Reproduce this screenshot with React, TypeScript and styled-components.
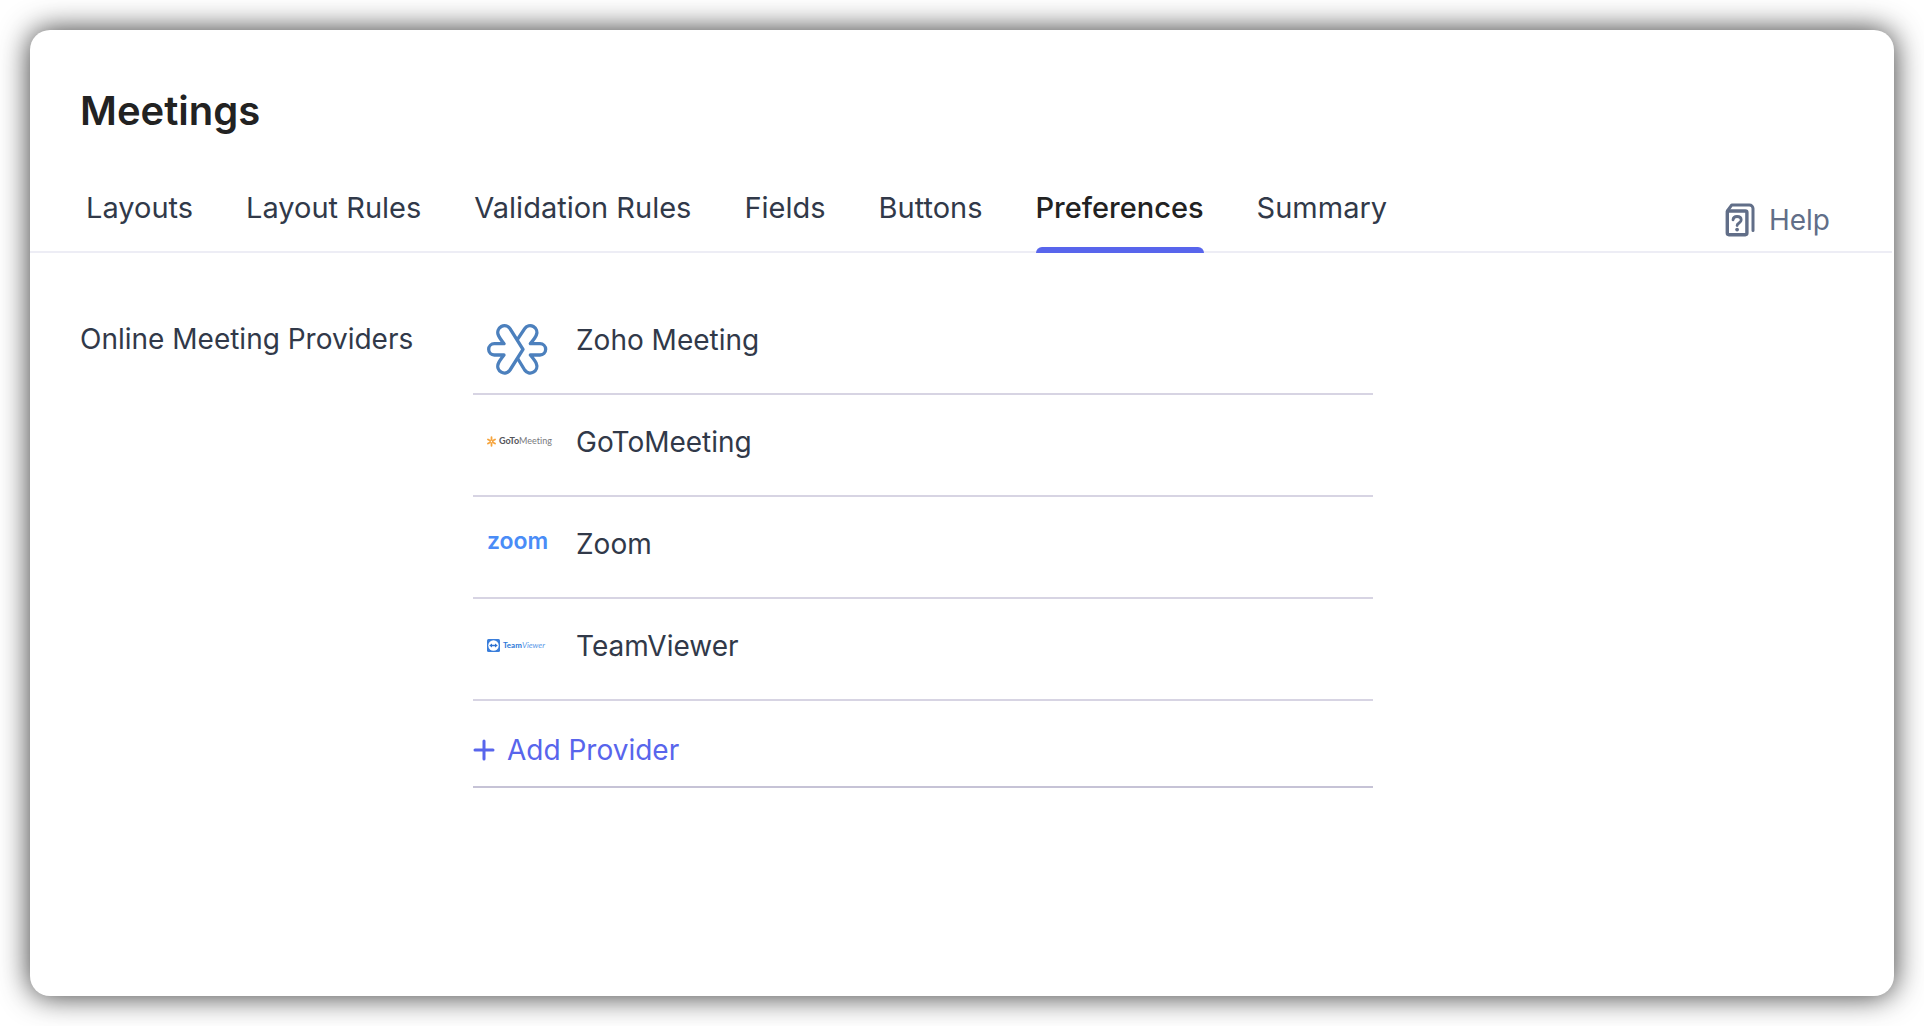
import React from "react";
import styled, { createGlobalStyle } from "styled-components";

const GlobalStyle = createGlobalStyle`
  *, *::before, *::after { box-sizing: border-box; }
  html, body, #root { height: 100%; }
  body {
    margin: 0;
    background: #fff;
    color: #313949;
    font: 400 28px/36px Inter, "Liberation Sans", sans-serif;
  }
`;

const Page = styled.div`
  display: flex;
  min-height: 100%;
  padding: 30px;
`;

const Card = styled.main`
  flex: 1;
  min-width: 0;
  padding-top: 57px;
  border-radius: 20px;
  background: #fff;
  box-shadow: 0 0 30px rgba(0, 0, 0, 0.8);
`;

const Title = styled.h1`
  margin: 0;
  padding-left: 50px;
  color: #222;
  font-size: 40px;
  font-weight: 600;
  line-height: 48px;
`;

const TabBar = styled.div`
  display: flex;
  align-items: flex-end;
  justify-content: space-between;
  margin: 55px 2px 0 0;
  padding: 0 62px 0 56px;
  border-bottom: 2px solid #ededf5;
`;

const Tabs = styled.nav`
  display: flex;
  gap: 53px;
  margin-bottom: -2px;
`;

const Tab = styled.a<{ $active?: boolean }>`
  display: flex;
  flex-direction: column;
  gap: 21px;
  color: ${(p) => (p.$active ? "#222" : "#313949")};
  font-size: 29px;
  font-weight: ${(p) => (p.$active ? 500 : 400)};
  text-decoration: none;
  white-space: nowrap;

  &::after {
    content: "";
    height: 6px;
    border-radius: 6px 6px 0 0;
    background: ${(p) => (p.$active ? "#5865ec" : "transparent")};
  }
`;

const HelpLink = styled.a`
  display: flex;
  align-items: center;
  gap: 14px;
  margin-bottom: 13px;
  color: #616e88;
  text-decoration: none;
`;

const Content = styled.section`
  display: flex;
  padding: 40px 50px;
`;

const SectionLabel = styled.h2`
  flex: 0 0 393px;
  margin: 0;
  padding-top: 28px;
  font-size: 28px;
  font-weight: 400;
  line-height: 36px;
`;

const ProviderList = styled.ul`
  flex: 0 1 900px;
  margin: 0;
  padding: 0;
  list-style: none;
`;

const ProviderRow = styled.li`
  display: flex;
  align-items: flex-start;
  min-height: 102px;
  padding: 29px 0 0 14px;
  border-bottom: 2px solid #d7d4e3;
`;

const LogoCell = styled.div`
  display: flex;
  align-items: center;
  flex: 0 0 89px;
  min-height: 34px;
`;

const Wordmark = styled.span<{ $size: number; $color: string }>`
  display: flex;
  align-items: center;
  gap: 3px;
  color: ${(p) => p.$color};
  font-family: Lato, sans-serif;
  font-size: ${(p) => p.$size}px;
  font-weight: 700;
  font-variant-ligatures: none;
  line-height: 28px;
  white-space: nowrap;
`;

const ZoomMark = styled(Wordmark)`
  padding-bottom: 4px;
  font-family: Inter, sans-serif;
  font-weight: 600;
`;

const Thin = styled.span<{ $color: string; $slanted?: boolean }>`
  color: ${(p) => p.$color};
  font-style: ${(p) => (p.$slanted ? "italic" : "normal")};
  font-weight: 400;
`;

const AddRow = styled.li`
  padding: 31px 0 18px;
  border-bottom: 2px solid #c6c3d6;
`;

const AddButton = styled.button`
  display: flex;
  align-items: center;
  gap: 12px;
  padding: 0;
  border: 0;
  background: none;
  color: #5865ec;
  font: inherit;
  cursor: pointer;
`;

const HelpIcon = () => (
  <svg width="30" height="34" viewBox="0 0 30 34" fill="none" stroke="currentColor" strokeLinecap="round" strokeLinejoin="round" aria-hidden="true">
    <rect x="2.3" y="8" width="19.6" height="23.7" rx="1.6" strokeWidth="3.4" />
    <path d="M2.3 8 6.8 1.9H24.4a3.6 3.6 0 0 1 3.6 3.6V27.4" strokeWidth="3" />
    <path d="M8 16.8c.2-2 1.8-3.300 4-3.300 2.4 0 4.2 1.4 4.2 3.600 0 2.900-4.100 2.800-4.100 5.400" strokeWidth="2.8" />
    <circle cx="12.1" cy="26.6" r="1.9" fill="currentColor" stroke="none" />
  </svg>
);

const ZohoMeetingLogo = () => (
  <svg width="61" height="54" viewBox="82 66 183 162" fill="none" stroke="#4c80bd" strokeWidth="10" strokeLinejoin="round" role="img" aria-label="Zoho Meeting logo">
    <path d="M190 148 151 86A20 20 0 0 0 116 105Q118 112 133 131H104A17 17 0 0 0 104 165H133Q118 184 116 191A20 20 0 0 0 151 210Z" />
    <path d="M173 119 195 86A20 20 0 0 1 230 105Q228 112 212 131H241A17 17 0 0 1 241 165H212Q228 184 230 191A20 20 0 0 1 195 210L173 174" />
  </svg>
);

const GoToMeetingLogo = () => (
  <Wordmark $size={9} $color="#55565a">
    <svg width="9" height="11" viewBox="0 0 18 22" stroke="#f6a43c" strokeWidth="3.6" strokeLinecap="round" aria-hidden="true">
      <path d="M9 2.500V7M9 15v4.500M2 7l3.800 2M12.200 13l3.800 2M2 15l3.800-2M12.200 9 16 7" />
      <circle cx="9" cy="11" r="2.4" fill="none" strokeWidth="2" />
    </svg>
    <span>GoTo<Thin $color="#77787c">Meeting</Thin></span>
  </Wordmark>
);

const ZoomLogo = () => <ZoomMark $size={23} $color="#4a8cf7">zoom</ZoomMark>;

const TeamViewerLogo = () => (
  <Wordmark $size={8} $color="#2b78d8">
    <svg width="13" height="13" viewBox="0 0 26 26" aria-hidden="true">
      <rect width="26" height="26" rx="3" fill="#3a7edb" />
      <circle cx="13" cy="13" r="10.5" fill="#fff" />
      <path d="m4.500 13 5.500-4v2.700h6V9l5.500 4-5.500 4v-2.700h-6V17z" fill="#2b70d0" />
    </svg>
    <span>Team<Thin $color="#5b99e8" $slanted>Viewer</Thin></span>
  </Wordmark>
);

const PlusIcon = () => (
  <svg width="22" height="22" viewBox="0 0 22 22" stroke="currentColor" strokeWidth="3" strokeLinecap="round" aria-hidden="true">
    <path d="M11 2v18M2 11h18" />
  </svg>
);

const tabs = ["Layouts", "Layout Rules", "Validation Rules", "Fields", "Buttons", "Preferences", "Summary"];

const providers = [
  { name: "Zoho Meeting", Logo: ZohoMeetingLogo },
  { name: "GoToMeeting", Logo: GoToMeetingLogo },
  { name: "Zoom", Logo: ZoomLogo },
  { name: "TeamViewer", Logo: TeamViewerLogo },
];

export default function App() {
  const [active, setActive] = React.useState("Preferences");
  return (
    <>
      <GlobalStyle />
      <Page>
        <Card>
          <Title>Meetings</Title>
          <TabBar>
            <Tabs>
              {tabs.map((tab) => (
                <Tab
                  key={tab}
                  href="#"
                  $active={tab === active}
                  aria-current={tab === active ? "page" : undefined}
                  onClick={() => setActive(tab)}
                >
                  {tab}
                </Tab>
              ))}
            </Tabs>
            <HelpLink href="#">
              <HelpIcon />
              Help
            </HelpLink>
          </TabBar>
          <Content>
            <SectionLabel>Online Meeting Providers</SectionLabel>
            <ProviderList>
              {providers.map(({ name, Logo }) => (
                <ProviderRow key={name}>
                  <LogoCell>
                    <Logo />
                  </LogoCell>
                  {name}
                </ProviderRow>
              ))}
              <AddRow>
                <AddButton type="button">
                  <PlusIcon />
                  Add Provider
                </AddButton>
              </AddRow>
            </ProviderList>
          </Content>
        </Card>
      </Page>
    </>
  );
}
